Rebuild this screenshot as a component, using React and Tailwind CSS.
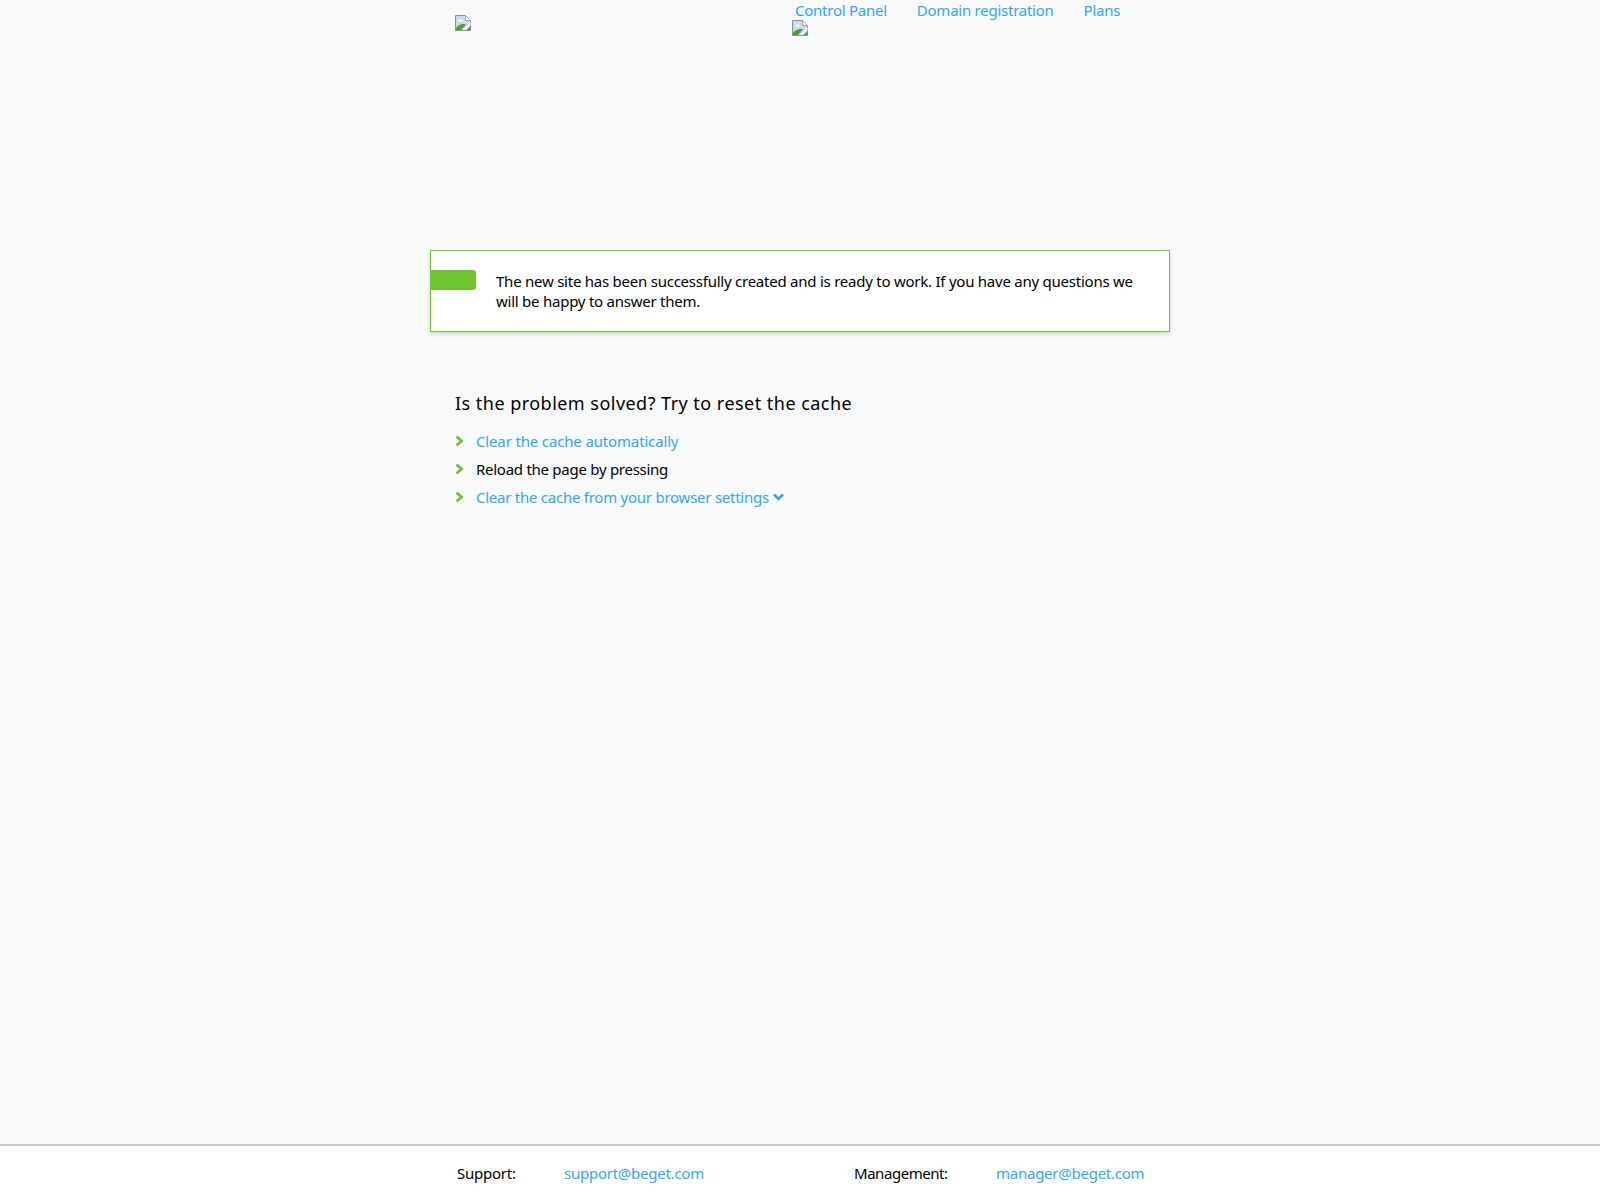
const font = { fontFamily: '"Noto Sans", sans-serif' };

function BrokenImage() {
  return (
    <svg width="16" height="16" viewBox="0 0 16 16" className="block">
      <path d="M0.500 0.500H10.500L15.500 5.500V15.500H0.500Z" fill="#c9d9f4" stroke="#8f8f8f" />
      <path d="M10.500 0.500V5.500H15.500Z" fill="#fff" stroke="#a8a8a8" />
      <path d="M3 6.500C3 5 5 4 6.500 5C8.500 5 9 6.500 8 6.500Z" fill="#fff" />
      <path d="M1 15V13C4 9 8 8.500 11 9.500L6 15Z" fill="#4aa52e" />
      <path d="M15.500 7L8 15H10.500L15.500 10Z" fill="#f8f9fb" />
      <path d="M11.500 15L15 11.500V15Z" fill="#4aa52e" />
    </svg>
  );
}

function Chevron() {
  return (
    <svg width="9" height="12" viewBox="0 0 9 12" className="shrink-0 -mt-[1px]">
      <path d="M1.500 1.500L6.500 6L1.500 10.500" fill="none" stroke="#74bd35" strokeWidth="2.800" />
    </svg>
  );
}

function ChevronDown() {
  return (
    <svg width="11" height="8" viewBox="0 0 11 8" className="inline-block ml-[4px] align-[2px]">
      <path d="M1 1.500L5.500 6L10 1.500" fill="none" stroke="#35a7ee" strokeWidth="2.500" />
    </svg>
  );
}

export default function App() {
  return (
    <div style={font} className="min-h-[1200px] bg-[#f8f9fb] flex flex-col text-[15px] text-black">
      <div className="w-[740px] mx-auto flex-1 flex flex-col">
        <header className="h-[250px] flex pl-[25px]">
          <div className="w-[337px] pt-[15px]"><BrokenImage /></div>
          <div>
            <nav className="flex gap-[30px] pl-[3px] h-[20px] text-[#35a7ee] leading-[21px] tracking-[-0.25px]">
              <a>Control Panel</a>
              <a>Domain registration</a>
              <a>Plans</a>
            </nav>
            <BrokenImage />
          </div>
        </header>
        <div className="h-[82px] bg-white border border-[#6fc42f] shadow-[0_2px_4px_rgba(0,0,0,0.15)] flex pt-[19px]">
          <div className="w-[45px] h-[20px] bg-[#6fc42f] rounded-r-[3px] shrink-0" />
          <p className="ml-[20px] w-[650px] pt-[1px] leading-[20px] tracking-[-0.24px]">
            The new site has been successfully created and is ready to work. If you have any questions we will be happy to answer them.
          </p>
        </div>
        <section className="pl-[25px] pt-[59px]">
          <h2 className="text-[18px] leading-[24px] font-normal tracking-[0.47px]">Is the problem solved? Try to reset the cache</h2>
          <ul className="mt-[15px] flex flex-col gap-[6px] leading-[22px]">
            <li className="flex items-center gap-[12px] text-[#35a7ee] tracking-[-0.15px]"><Chevron />Clear the cache automatically</li>
            <li className="flex items-center gap-[12px] tracking-[-0.27px]"><Chevron />Reload the page by pressing</li>
            <li className="flex items-center gap-[12px] text-[#35a7ee] tracking-[-0.25px]">
              <Chevron />
              <span>Clear the cache from your browser settings<ChevronDown /></span>
            </li>
          </ul>
        </section>
      </div>
      <footer className="h-[56px] bg-white border-t-2 border-[#c8c8c8] pt-[16px]">
        <div className="w-[740px] mx-auto flex pl-[27px] tracking-[-0.25px]">
          <span className="w-[107px]">Support:</span>
          <a className="w-[290px] text-[#35a7ee]">support@beget.com</a>
          <span className="w-[142px] tracking-[-0.45px]">Management:</span>
          <a className="text-[#35a7ee]">manager@beget.com</a>
        </div>
      </footer>
    </div>
  );
}
